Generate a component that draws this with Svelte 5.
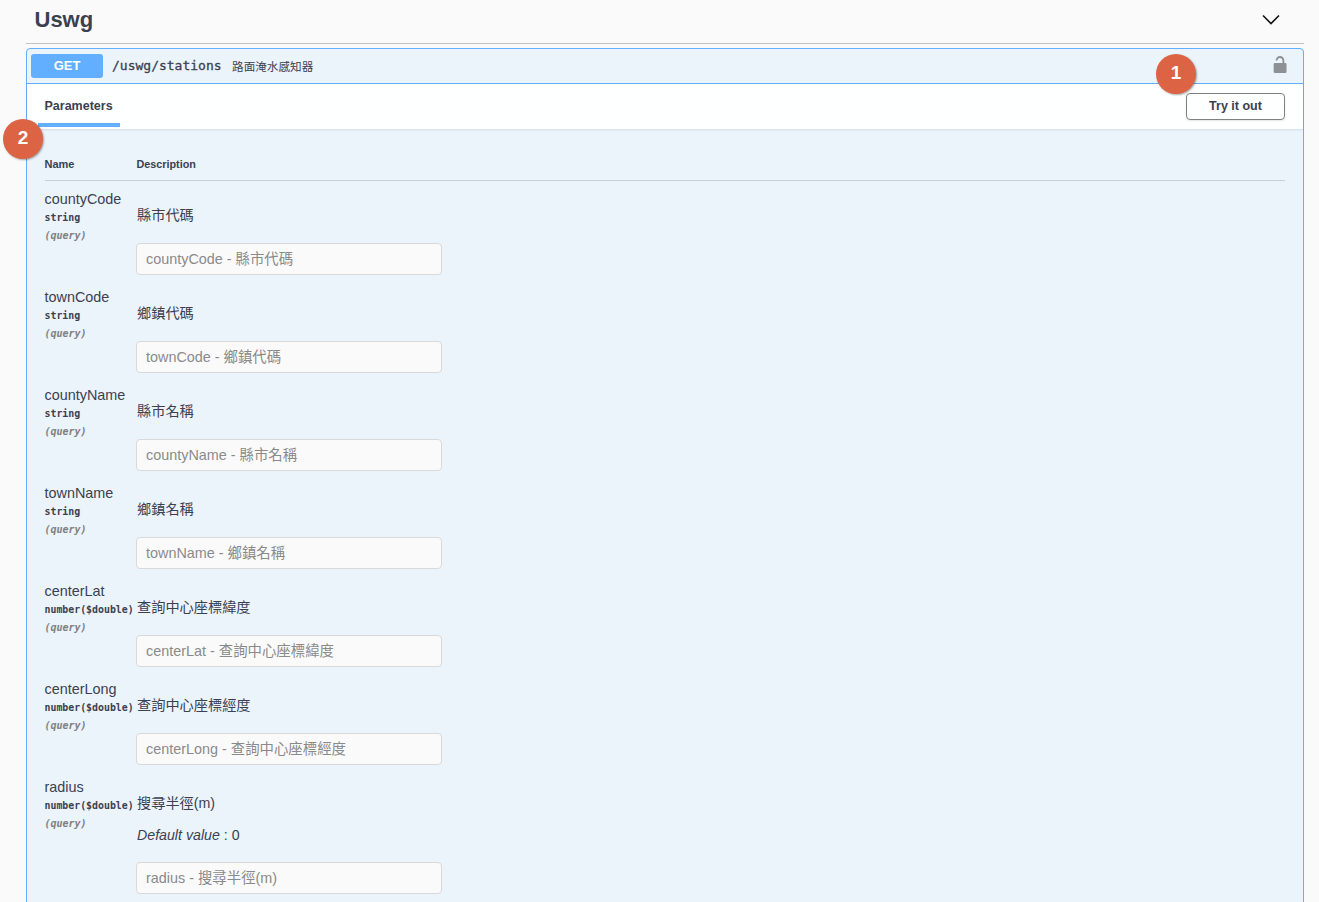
<script lang="ts">
	interface Param {
		name: string;
		type: string;
		desc: string;
		fallback?: string;
	}

	const params: Param[] = [
		{ name: 'countyCode', type: 'string', desc: '縣市代碼' },
		{ name: 'townCode', type: 'string', desc: '鄉鎮代碼' },
		{ name: 'countyName', type: 'string', desc: '縣市名稱' },
		{ name: 'townName', type: 'string', desc: '鄉鎮名稱' },
		{ name: 'centerLat', type: 'number($double)', desc: '查詢中心座標緯度' },
		{ name: 'centerLong', type: 'number($double)', desc: '查詢中心座標經度' },
		{ name: 'radius', type: 'number($double)', desc: '搜尋半徑(m)', fallback: '0' }
	];
</script>

<div class="page">
	<div class="section">
		<h3 class="tag">
			<span>Uswg</span>
			<svg class="arrow" viewBox="0 0 20 20" width="20" height="20" aria-hidden="true">
				<path d="M2 5.5 L10 13.5 L18 5.5" fill="none" stroke="#111" stroke-width="1.6" />
			</svg>
		</h3>

		<div class="opblock">
			<div class="summary">
				<span class="method">GET</span>
				<span class="path">/uswg/stations</span>
				<span class="summary-desc">路面淹水感知器</span>
				<svg class="lock" viewBox="0 0 14 17" width="14" height="17" aria-hidden="true">
					<path d="M3.6 4.4 a3.4 3.4 0 0 1 6.8 0 V8" fill="none" stroke="#8d9094" stroke-width="1.8" />
					<rect x="0.7" y="7" width="12.8" height="10" rx="1.2" fill="#8d9094" />
				</svg>
			</div>

			<div class="tabs">
				<div class="tab">Parameters</div>
				<button class="try">Try it out</button>
			</div>

			<div class="params">
				<div class="head">
					<div class="col-name">Name</div>
					<div class="col-title">Description</div>
				</div>

				{#each params as p}
					<div class="row">
						<div class="col-name">
							<div class="name">{p.name}</div>
							<div class="type">{p.type}</div>
							<div class="in">(query)</div>
						</div>
						<div class="col-desc">
							<div class="desc">{p.desc}</div>
							{#if p.fallback}
								<div class="default"><i>Default value</i> : {p.fallback}</div>
							{/if}
							<input class="field" placeholder="{p.name} - {p.desc}" />
						</div>
					</div>
				{/each}
			</div>
		</div>
	</div>

	<div class="badge one">1</div>
	<div class="badge two">2</div>
</div>

<style>
	:global(body) {
		background: #fafafa;
	}

	.page {
		position: relative;
		height: 902px;
		overflow: hidden;
		font-family: 'Liberation Sans', 'Noto Sans CJK TC', sans-serif;
		color: #3b4151;
	}

	.section {
		margin: 0 15px 0 26px;
	}

	.tag {
		display: flex;
		align-items: center;
		justify-content: space-between;
		height: 44px;
		margin: 0 0 4px;
		padding: 0 23px 4px 8.5px;
		box-sizing: border-box;
		border-bottom: 1px solid rgba(59, 65, 81, 0.3);
		font-size: 22px;
		font-weight: 700;
	}

	.arrow {
		display: block;
	}

	.opblock {
		border: 1px solid #61affe;
		border-radius: 4px;
		background: #ebf3fb;
	}

	.summary {
		display: flex;
		align-items: center;
		height: 34px;
		padding: 0 16px 0 4px;
		border-bottom: 1px solid #61affe;
	}

	.method {
		width: 72px;
		height: 24px;
		line-height: 23px;
		border-radius: 3px;
		background: #61affe;
		color: #fff;
		font-size: 13px;
		font-weight: 700;
		text-align: center;
	}

	.path {
		margin: 0 0 2px 9px;
		font-family: 'DejaVu Sans Mono', monospace;
		font-size: 13px;
		-webkit-text-stroke: 0.3px #3b4151;
		color: #3b4151;
	}

	.summary-desc {
		margin-left: 10.5px;
		font-size: 11.6px;
		color: #3b4151;
	}

	.lock {
		margin-left: auto;
		margin-top: -4px;
	}

	.tabs {
		display: flex;
		align-items: center;
		justify-content: space-between;
		height: 45px;
		padding: 0 18px 0 11px;
		background: rgba(255, 255, 255, 0.95);
		box-shadow: 0 1px 2px rgba(0, 0, 0, 0.1);
	}

	.tab {
		align-self: flex-start;
		box-sizing: border-box;
		width: 82px;
		height: 43px;
		padding: 14px 0 0 6.5px;
		border-bottom: 4px solid #61affe;
		font-size: 12.5px;
		font-weight: 700;
		line-height: 16px;
	}

	.try {
		width: 99px;
		height: 27px;
		padding: 0 0 2px;
		border: 1px solid #808080;
		border-radius: 4px;
		background: transparent;
		font-family: inherit;
		font-size: 12.5px;
		font-weight: 700;
		color: #3b4151;
		box-shadow: 0 1px 2px rgba(0, 0, 0, 0.1);
	}

	.params {
		padding: 20px 18px 40px 17.5px;
	}

	.head {
		display: flex;
		height: 32px;
		box-sizing: border-box;
		padding-top: 9px;
		border-bottom: 1px solid rgba(59, 65, 81, 0.2);
		font-size: 11px;
		font-weight: 700;
	}

	.col-name {
		flex: 0 0 91.5px;
		width: 91.5px;
	}

	.col-title {
		margin-left: 0.5px;
		font-size: 10.8px;
	}

	.row {
		display: flex;
		padding: 10px 0 0;
		margin-bottom: 4px;
	}

	.name {
		font-size: 14.4px;
		line-height: 16px;
	}

	.type {
		margin-top: 4px;
		font-family: 'DejaVu Sans Mono', monospace;
		font-size: 9.9px;
		font-weight: 600;
		line-height: 14px;
		white-space: nowrap;
	}

	.in {
		margin-top: 4px;
		font-family: 'DejaVu Sans Mono', monospace;
		font-size: 10px;
		font-style: italic;
		font-weight: 600;
		line-height: 14px;
		color: #808080;
	}

	.desc {
		margin: 15px 0 0 1px;
		font-size: 14.2px;
		line-height: 18px;
	}

	.default {
		margin: 14px 0 0 1px;
		font-size: 14.2px;
		line-height: 18px;
	}

	.field {
		display: block;
		box-sizing: border-box;
		width: 306px;
		height: 32px;
		margin: 19px 0 0;
		padding: 0 9px;
		border: 1px solid #d9d9d9;
		border-radius: 4px;
		background: #fafafa;
		font-family: inherit;
		font-size: 14.4px;
	}

	.default + .field {
		margin-top: 18px;
	}

	.field::placeholder {
		color: #8a8a8a;
		opacity: 1;
	}

	.badge {
		position: absolute;
		width: 40px;
		height: 40px;
		border-radius: 50%;
		background: #dc6444;
		color: #fff;
		font-size: 19px;
		font-weight: 700;
		line-height: 38px;
		text-align: center;
		box-shadow: 1px 1px 2px rgba(0, 0, 0, 0.35);
	}

	.one {
		left: 1156px;
		top: 54px;
	}

	.two {
		left: 3px;
		top: 119px;
	}
</style>
